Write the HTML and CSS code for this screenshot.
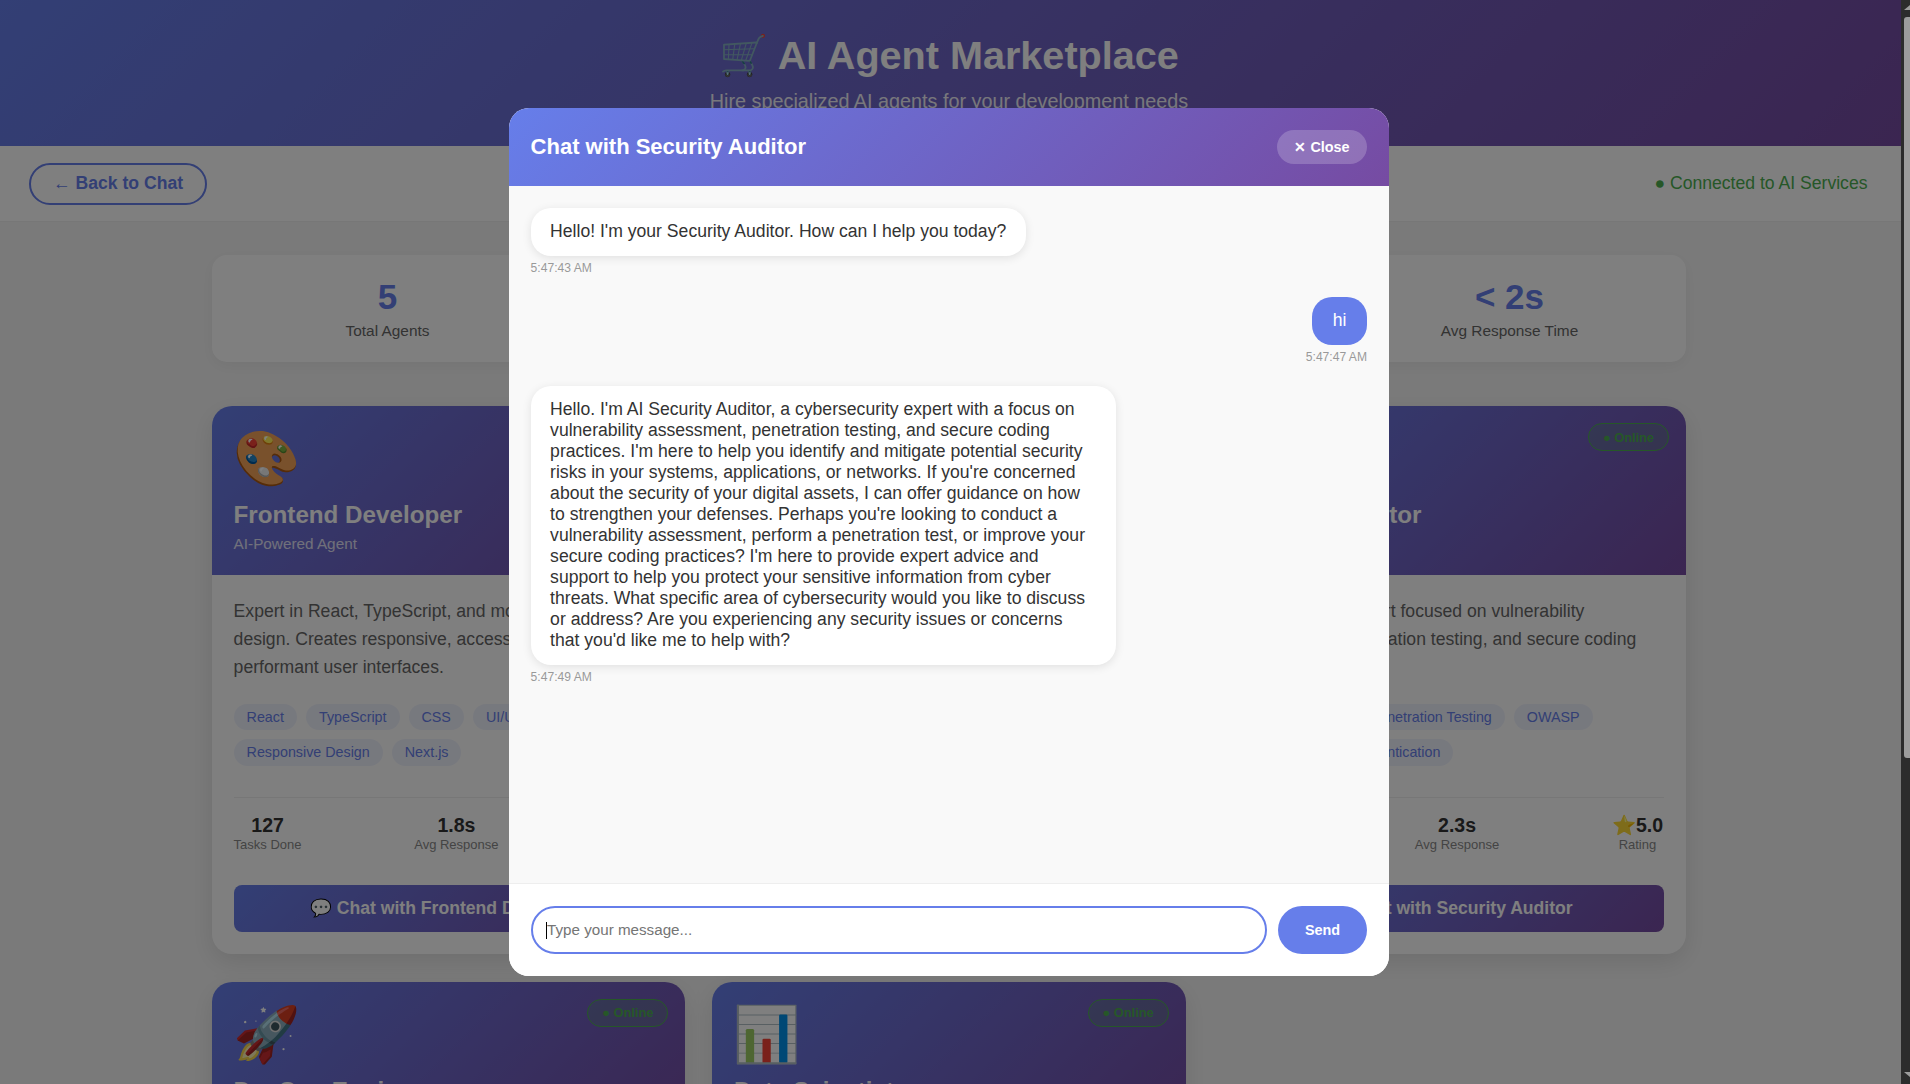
FILE: index.html
```html
<!DOCTYPE html>
<html lang="en">
<head>
    <meta charset="UTF-8">
    <meta name="viewport" content="width=device-width, initial-scale=1.0">
    <title>AI Agent Marketplace</title>
    <link rel="stylesheet" href="styles.css">
</head>
<body>
    <div class="window">
        <div class="page">
            <header class="top-header">
                <h1>🛒 AI Agent Marketplace</h1>
                <p>Hire specialized AI agents for your development needs</p>
            </header>

            <nav class="nav-bar">
                <a class="back-btn" href="#">← Back to Chat</a>
                <span class="conn-status">● Connected to AI Services</span>
            </nav>

            <main class="content">
                <section class="stats">
                    <div class="stat-box"><div class="stat-num">5</div><div class="stat-label">Total Agents</div></div>
                    <div class="stat-box"><div class="stat-num">5</div><div class="stat-label">Online Now</div></div>
                    <div class="stat-box"><div class="stat-num">24/7</div><div class="stat-label">Availability</div></div>
                    <div class="stat-box"><div class="stat-num">&lt; 2s</div><div class="stat-label">Avg Response Time</div></div>
                </section>

                <section class="agents">
                    <article class="agent-card">
                        <div class="agent-head">
                            <span class="badge">● Online</span>
                            <div class="agent-icon">🎨</div>
                            <h3>Frontend Developer</h3>
                            <div class="agent-sub">AI-Powered Agent</div>
                        </div>
                        <div class="agent-body">
                            <p class="agent-desc">Expert in React, TypeScript, and modern frontend design. Creates responsive, accessible, and performant user interfaces.</p>
                            <div class="tags">
                                <span class="tag">React</span><span class="tag">TypeScript</span><span class="tag">CSS</span><span class="tag">UI/UX</span><span class="tag">Responsive Design</span><span class="tag">Next.js</span>
                            </div>
                            <div class="agent-stats">
                                <div class="mini"><b>127</b><small>Tasks Done</small></div>
                                <div class="mini"><b>1.8s</b><small>Avg Response</small></div>
                                <div class="mini"><b>⭐4.9</b><small>Rating</small></div>
                            </div>
                            <button class="hire-btn">💬 Chat with Frontend Developer</button>
                        </div>
                    </article>

                    <article class="agent-card">
                        <div class="agent-head">
                            <span class="badge">● Online</span>
                            <div class="agent-icon">⚙️</div>
                            <h3>Backend Developer</h3>
                            <div class="agent-sub">AI-Powered Agent</div>
                        </div>
                        <div class="agent-body">
                            <p class="agent-desc">Specialist in server side systems, APIs and databases. Builds scalable, reliable and secure backend services.</p>
                            <div class="tags">
                                <span class="tag">Node.js</span><span class="tag">Python</span><span class="tag">SQL</span><span class="tag">REST</span><span class="tag">Docker</span>
                            </div>
                            <div class="agent-stats">
                                <div class="mini"><b>98</b><small>Tasks Done</small></div>
                                <div class="mini"><b>2.1s</b><small>Avg Response</small></div>
                                <div class="mini"><b>⭐4.8</b><small>Rating</small></div>
                            </div>
                            <button class="hire-btn">💬 Chat with Backend Developer</button>
                        </div>
                    </article>

                    <article class="agent-card">
                        <div class="agent-head">
                            <span class="badge">● Online</span>
                            <div class="agent-icon">🔒</div>
                            <h3>Security Auditor</h3>
                            <div class="agent-sub">AI-Powered Agent</div>
                        </div>
                        <div class="agent-body">
                            <p class="agent-desc">Cybersecurity expert focused on vulnerability assessment, penetration testing, and secure coding practices.</p>
                            <div class="tags">
                                <span class="tag">Cybersecurity</span><span class="tag">Penetration Testing</span><span class="tag">OWASP</span><span class="tag">Encryption</span><span class="tag">Authentication</span>
                            </div>
                            <div class="agent-stats">
                                <div class="mini"><b>64</b><small>Tasks Done</small></div>
                                <div class="mini"><b>2.3s</b><small>Avg Response</small></div>
                                <div class="mini"><b>⭐5.0</b><small>Rating</small></div>
                            </div>
                            <button class="hire-btn">💬 Chat with Security Auditor</button>
                        </div>
                    </article>

                    <article class="agent-card">
                        <div class="agent-head">
                            <span class="badge">● Online</span>
                            <div class="agent-icon">🚀</div>
                            <h3>DevOps Engineer</h3>
                            <div class="agent-sub">AI-Powered Agent</div>
                        </div>
                    </article>

                    <article class="agent-card">
                        <div class="agent-head">
                            <span class="badge">● Online</span>
                            <div class="agent-icon">📊</div>
                            <h3>Data Scientist</h3>
                            <div class="agent-sub">AI-Powered Agent</div>
                        </div>
                    </article>
                </section>
            </main>

            <!-- chat window over the marketplace -->
            <div class="overlay">
                <div class="chat-modal">
                    <div class="chat-head">
                        <h2>Chat with Security Auditor</h2>
                        <button class="close-btn">✕ Close</button>
                    </div>
                    <div class="chat-messages">
                        <div class="msg">
                            <div class="bubble">Hello! I'm your Security Auditor. How can I help you today?</div>
                            <div class="msg-time">5:47:43 AM</div>
                        </div>
                        <div class="msg mine">
                            <div class="bubble">hi</div>
                            <div class="msg-time">5:47:47 AM</div>
                        </div>
                        <div class="msg">
                            <div class="bubble">Hello. I'm AI Security Auditor, a cybersecurity expert with a focus on vulnerability assessment, penetration testing, and secure coding practices. I'm here to help you identify and mitigate potential security risks in your systems, applications, or networks. If you're concerned about the security of your digital assets, I can offer guidance on how to strengthen your defenses. Perhaps you're looking to conduct a vulnerability assessment, perform a penetration test, or improve your secure coding practices? I'm here to provide expert advice and support to help you protect your sensitive information from cyber threats. What specific area of cybersecurity would you like to discuss or address? Are you experiencing any security issues or concerns that you'd like me to help with?</div>
                            <div class="msg-time">5:47:49 AM</div>
                        </div>
                    </div>
                    <div class="chat-input">
                        <div class="input-wrap">
                            <input type="text" placeholder="Type your message...">
                            <span class="caret"></span>
                        </div>
                        <button class="send-btn">Send</button>
                    </div>
                </div>
            </div>
        </div>

        <div class="scrollbar">
            <svg class="sb-arrow" width="6" height="5" viewBox="0 0 6 5"><path d="M0 5 L6 0 L6 5 Z" fill="#9c9c9c"/></svg>
            <div class="sb-thumb"></div>
            <svg class="sb-arrow sb-down" width="6" height="5" viewBox="0 0 6 5"><path d="M0 0 L6 0 L6 5 Z" fill="#9c9c9c"/></svg>
        </div>
    </div>
</body>
</html>
```

FILE: styles.css
```css
* {
    box-sizing: border-box;
}

body {
    font-family: "Liberation Sans", Arial, sans-serif;
    margin: 0;
    overflow: hidden;
    background-color: #f5f5f5;
    color: #333;
}

.window {
    display: flex;
    height: 1084px;
}

.page {
    position: relative;
    flex: 1;
    height: 1084px;
    overflow: hidden;
}

.scrollbar {
    width: 9px;
    height: 1084px;
    background-color: #2c2c2c;
    display: flex;
    flex-direction: column;
    align-items: flex-end;
    padding-top: 5px;
}

.sb-thumb {
    width: 6px;
    height: 741px;
    margin-top: 7px;
    background-color: #9c9c9c;
    border-radius: 3px 0 0 3px;
}

.sb-down {
    margin-top: auto;
    margin-bottom: 7px;
}

.top-header {
    height: 146px;
    padding: 32px 3px 0 0;
    text-align: center;
    color: white;
    background: linear-gradient(135deg, #667eea 0%, #764ba2 100%);
}

.top-header h1 {
    font-size: 39.6px;
    margin: 0 0 11px;
}

.top-header p {
    font-size: 19.8px;
    margin: 0;
    opacity: 0.9;
}

.nav-bar {
    height: 76px;
    padding: 0 33.5px 0 29px;
    display: flex;
    align-items: center;
    justify-content: space-between;
    background-color: white;
    border-bottom: 1px solid #eee;
}

.back-btn {
    height: 42px;
    padding: 0 22px;
    display: flex;
    align-items: center;
    font-size: 17.6px;
    font-weight: bold;
    color: #667eea;
    text-decoration: none;
    border: 2px solid #667eea;
    border-radius: 25px;
}

.conn-status {
    font-size: 17.6px;
    color: #4caf50;
}

.content {
    width: 1474px;
    margin-left: 212px;
    padding-top: 33px;
}

.stats {
    display: grid;
    grid-template-columns: repeat(4, 1fr);
    gap: 22px;
    margin-bottom: 44px;
}

.stat-box {
    height: 107px;
    padding: 22px 1px 0 0;
    text-align: center;
    background-color: white;
    border-radius: 15px;
    box-shadow: 0 4px 15px rgba(0, 0, 0, 0.05);
}

.stat-num {
    font-size: 35px;
    font-weight: bold;
    color: #667eea;
}

.stat-label {
    font-size: 15.4px;
    color: #666;
    margin-top: 5px;
}

.agents {
    display: grid;
    grid-template-columns: repeat(3, 1fr);
    gap: 28px 27px;
}

.agent-card {
    background-color: white;
    border-radius: 20px;
    overflow: hidden;
    box-shadow: 0 8px 25px rgba(0, 0, 0, 0.1);
}

.agent-head {
    position: relative;
    height: 169px;
    padding: 22px 21.6px;
    color: white;
    background: linear-gradient(135deg, #667eea 0%, #764ba2 100%);
}

.badge {
    position: absolute;
    top: 17px;
    right: 17px;
    height: 28px;
    padding: 0 14px;
    display: flex;
    align-items: center;
    font-size: 12.8px;
    font-weight: bold;
    color: #4caf50;
    background-color: rgba(76, 175, 80, 0.2);
    border: 1px solid #4caf50;
    border-radius: 15px;
}

.agent-icon {
    font-size: 54px;
    line-height: 60px;
    margin: 0 0 13px -1px;
}

.agent-head h3 {
    font-size: 24.2px;
    line-height: 28px;
    margin: 0 0 6px;
}

.agent-sub {
    font-size: 15.3px;
    opacity: 0.8;
}

.agent-body {
    padding: 22px 22px 22px 21.6px;
}

.agent-desc {
    font-size: 17.6px;
    line-height: 28px;
    color: #666;
    margin: 0 0 22.5px;
}

.tags {
    display: flex;
    flex-wrap: wrap;
    gap: 9px;
    margin-bottom: 31.5px;
}

.tag {
    height: 26.5px;
    padding: 0 13px;
    display: flex;
    align-items: center;
    font-size: 14.3px;
    color: #667eea;
    background-color: rgba(102, 126, 234, 0.1);
    border-radius: 15px;
}

.agent-stats {
    display: flex;
    justify-content: space-between;
    padding: 16px 1px 0 0;
    margin-bottom: 32.5px;
    border-top: 1px solid #eee;
}

.mini {
    text-align: center;
}

.mini b {
    display: block;
    font-size: 19.5px;
    color: #333;
}

.mini small {
    display: block;
    font-size: 13px;
    color: #888;
}

.hire-btn {
    width: 100%;
    height: 47px;
    font-family: inherit;
    font-size: 17.6px;
    font-weight: bold;
    color: white;
    border: none;
    border-radius: 8px;
    background: linear-gradient(135deg, #667eea 0%, #764ba2 100%);
}

.overlay {
    position: absolute;
    top: 0;
    left: 0;
    width: 100%;
    height: 100%;
    padding: 108px 3px 108px 0;
    display: flex;
    justify-content: center;
    background-color: rgba(0, 0, 0, 0.5);
}

.chat-modal {
    width: 880px;
    height: 868px;
    display: flex;
    flex-direction: column;
    background-color: white;
    border-radius: 20px;
    overflow: hidden;
}

.chat-head {
    height: 78px;
    padding: 0 22px 0 21.6px;
    display: flex;
    align-items: center;
    justify-content: space-between;
    color: white;
    background: linear-gradient(135deg, #667eea 0%, #764ba2 100%);
}

.chat-head h2 {
    font-size: 22px;
    margin: 0;
}

.close-btn {
    width: 90px;
    height: 34px;
    font-family: inherit;
    font-size: 14.4px;
    font-weight: bold;
    color: white;
    border: none;
    border-radius: 20px;
    background-color: rgba(255, 255, 255, 0.2);
}

.chat-messages {
    flex: 1;
    padding: 22px 22px 22px 21.6px;
    background-color: #f9f9f9;
    overflow: hidden;
}

.msg {
    margin-bottom: 22px;
}

.msg.mine {
    text-align: right;
}

.bubble {
    display: inline-block;
    max-width: 70%;
    padding: 13px 19.5px 14px;
    font-size: 17.6px;
    line-height: 21px;
    text-align: left;
    background-color: white;
    border-radius: 20px;
    box-shadow: 0 2px 10px rgba(0, 0, 0, 0.1);
}

.msg.mine .bubble {
    padding: 13px 20.5px 14px;
    color: white;
    background-color: #667eea;
    box-shadow: none;
}

.msg-time {
    font-size: 12.1px;
    color: #999;
    margin-top: 5px;
}

.chat-input {
    height: 93px;
    padding: 22px;
    display: flex;
    gap: 11px;
    background-color: white;
    border-top: 1px solid #eee;
}

.input-wrap {
    position: relative;
    flex: 1;
}

.input-wrap input {
    width: 100%;
    height: 48px;
    padding: 0 14px 2px;
    font-family: inherit;
    font-size: 15.2px;
    border: 2px solid #667eea;
    border-radius: 25px;
    outline: none;
}

.caret {
    position: absolute;
    left: 15px;
    top: 16px;
    width: 1px;
    height: 17px;
    background-color: black;
}

.send-btn {
    width: 89px;
    height: 48px;
    font-family: inherit;
    font-size: 14.4px;
    font-weight: bold;
    color: white;
    border: none;
    border-radius: 25px;
    background-color: #667eea;
}
```
